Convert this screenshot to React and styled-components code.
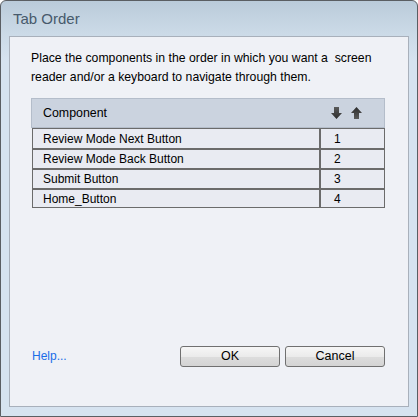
import React from "react";
import styled, { createGlobalStyle } from "styled-components";

const Global = createGlobalStyle`
  html, body { margin: 0; padding: 0; background: #ffffff; }
  body { font-family: "Liberation Sans", Arial, sans-serif; }
`;

const Window = styled.div`
  width: 418px;
  height: 417px;
  box-sizing: border-box;
  border: 1px solid #5a5e63;
  border-radius: 6px 6px 0 0;
  background: linear-gradient(to bottom, #bacbda 0px, #cad9e6 30px, #d6e3f0 60px, #d6e3f0 100%);
  display: flex;
  flex-direction: column;
  overflow: hidden;
`;

const TitleBar = styled.div`
  height: 35px;
  flex: none;
  display: flex;
  align-items: center;
  padding-left: 12px;
  font-size: 15px;
  color: #475a6c;
`;

const Panel = styled.div`
  margin: 0 8px 9px 8px;
  flex: 1;
  box-sizing: border-box;
  border: 1px solid #a8b0bb;
  background: #eff1f6;
  display: flex;
  flex-direction: column;
  padding: 12px 23px 0 21px;
`;

const Intro = styled.p`
  margin: 0;
  font-size: 12.25px;
  line-height: 19px;
  white-space: nowrap;
  color: #000;
`;

const Table = styled.div`
  margin-top: 11px;
  display: flex;
  flex-direction: column;
`;

const Header = styled.div`
  height: 30px;
  box-sizing: border-box;
  border: 1px solid #b4bdca;
  background: #cbd3df;
  display: flex;
  align-items: center;
  justify-content: space-between;
  padding: 0 22px 0 11px;
  font-size: 12.4px;
  color: #000;
`;

const Arrows = styled.div`
  display: flex;
  gap: 9px;
  align-items: center;
`;

const Row = styled.div`
  display: grid;
  grid-template-columns: 1fr 65px;
  height: 20px;
  box-sizing: border-box;
  margin-left: 1px;
  border: 1px solid #6b6b6b;
  border-top-width: ${(p) => (p.$first ? "1px" : "2px")};
  border-bottom-width: ${(p) => (p.$last ? "1px" : "0")};
  background: #e9ebf2;
  font-size: 12px;
  color: #000;
`;

const Cell = styled.div`
  display: flex;
  align-items: center;
  white-space: nowrap;
  padding-left: ${(p) => (p.$num ? "13px" : "10px")};
  border-left: ${(p) => (p.$num ? "2px solid #6b6b6b" : "none")};
`;

const Spacer = styled.div`
  flex: 1;
`;

const Footer = styled.div`
  display: flex;
  align-items: center;
  height: 20px;
  margin-bottom: 40px;
`;

const HelpLink = styled.a`
  font-size: 12px;
  color: #1a6de8;
  text-decoration: none;
  margin-left: 1px;
  flex: 1;
`;

const Button = styled.button`
  width: 100px;
  height: 21px;
  margin-left: 5px;
  box-sizing: border-box;
  border: 1px solid #707070;
  border-radius: 3px;
  background: linear-gradient(to bottom, #f6f6f6 0%, #ebebeb 50%, #dddddd 51%, #d4d4d4 100%);
  font-family: "Liberation Sans", Arial, sans-serif;
  font-size: 12.5px;
  color: #000;
  padding: 0;
`;

const ArrowDown = () => (
  <svg width="11" height="12" viewBox="0 0 11 12">
    <defs>
      <linearGradient id="ad" x1="0" y1="0" x2="0" y2="1">
        <stop offset="0" stopColor="#5a5a5a" />
        <stop offset="1" stopColor="#2e2e2e" />
      </linearGradient>
    </defs>
    <path d="M3 0h5v6h3l-5.5 6L0 6h3z" fill="url(#ad)" />
  </svg>
);

const ArrowUp = () => (
  <svg width="11" height="12" viewBox="0 0 11 12">
    <defs>
      <linearGradient id="au" x1="0" y1="0" x2="0" y2="1">
        <stop offset="0" stopColor="#2e2e2e" />
        <stop offset="1" stopColor="#5a5a5a" />
      </linearGradient>
    </defs>
    <path d="M5.5 0L11 6H8v6H3V6H0z" fill="url(#au)" />
  </svg>
);

const rows = [
  "Review Mode Next Button",
  "Review Mode Back Button",
  "Submit Button",
  "Home_Button",
];

export default function App() {
  return (
    <>
      <Global />
      <Window>
        <TitleBar>Tab Order</TitleBar>
        <Panel>
          <Intro>
            Place the components in the order in which you want a&nbsp; screen
            <br />
            reader and/or a keyboard to navigate through them.
          </Intro>
          <Table>
            <Header>
              <span>Component</span>
              <Arrows>
                <ArrowDown />
                <ArrowUp />
              </Arrows>
            </Header>
            {rows.map((r, i) => (
              <Row key={r} $first={i === 0} $last={i === rows.length - 1}>
                <Cell>{r}</Cell>
                <Cell $num>{i + 1}</Cell>
              </Row>
            ))}
          </Table>
          <Spacer />
          <Footer>
            <HelpLink href="#">Help...</HelpLink>
            <Button>OK</Button>
            <Button>Cancel</Button>
          </Footer>
        </Panel>
      </Window>
    </>
  );
}
